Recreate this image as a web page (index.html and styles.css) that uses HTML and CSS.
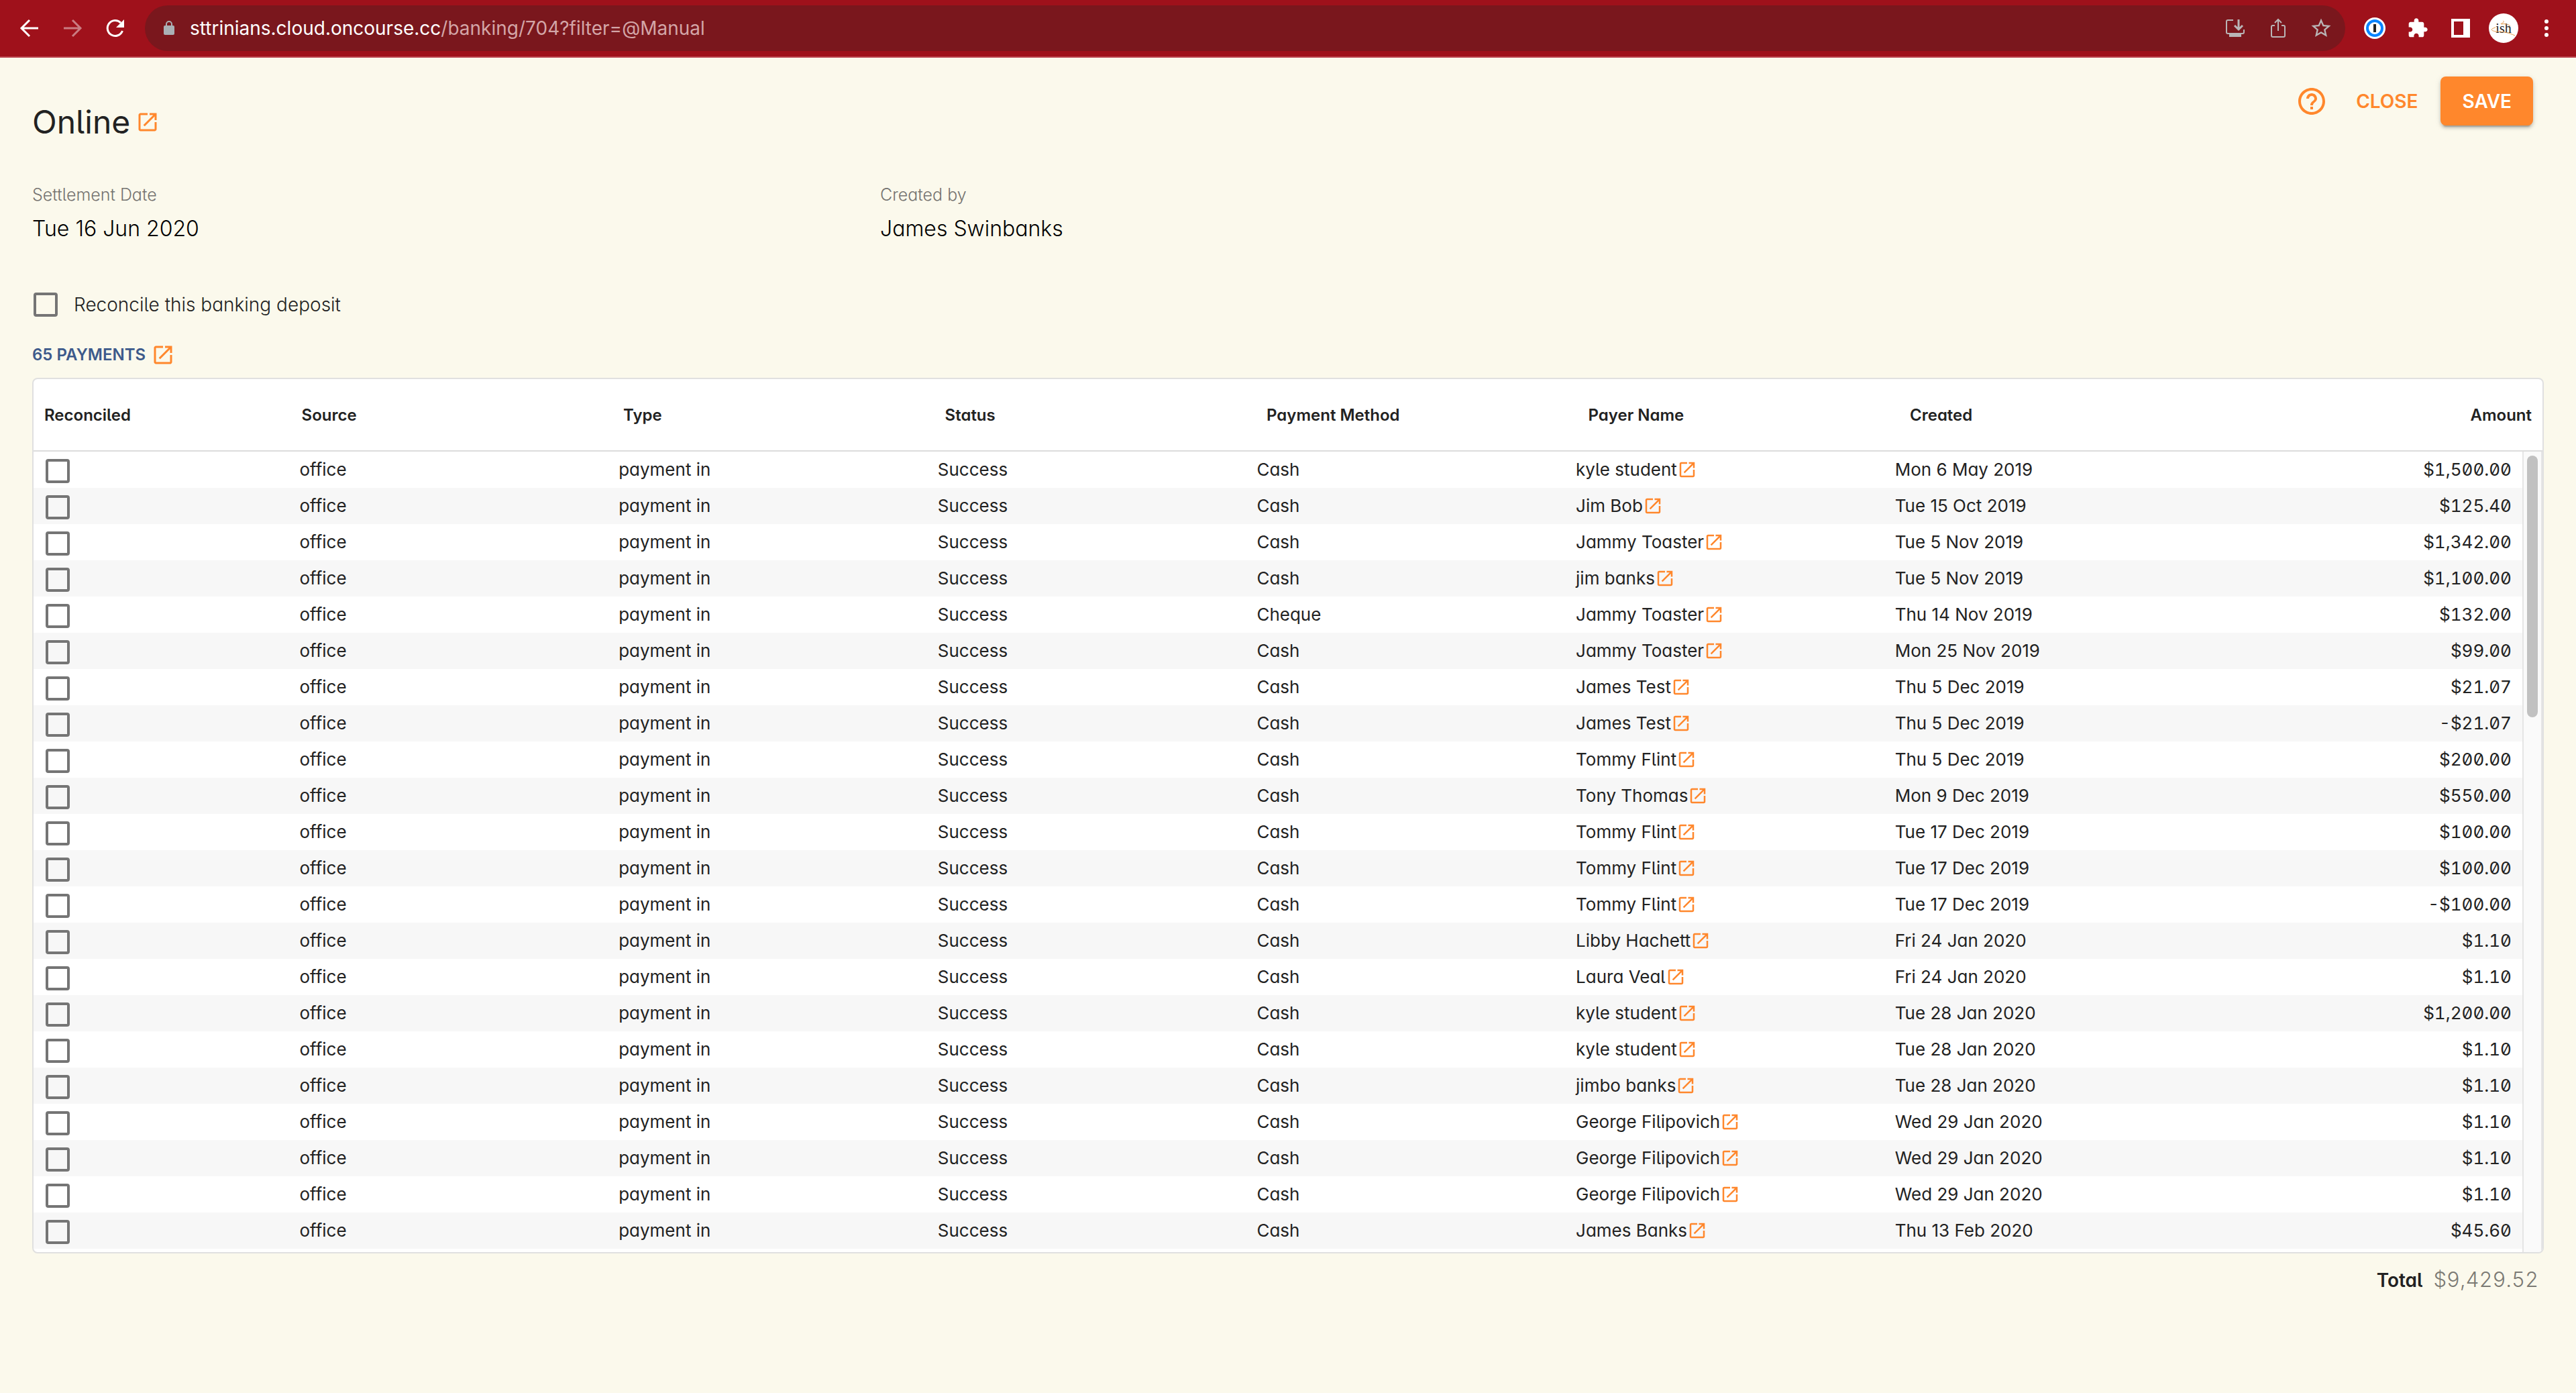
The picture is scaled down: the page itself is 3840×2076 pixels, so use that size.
FILE: index.html
```html
<!DOCTYPE html>
<html lang="en">
<head>
<meta charset="utf-8">
<title>Online – Banking deposit</title>
<link rel="stylesheet" href="styles.css">
</head>
<body>
<svg class="defs" aria-hidden="true">
  <symbol id="open" viewBox="0 0 24 24"><path d="M19 19H5V5h7V3H5c-1.110 0-2 .9-2 2v14c0 1.100.89 2 2 2h14c1.100 0 2-.9 2-2v-7h-2v7zM14 3v2h3.590l-9.830 9.830 1.410 1.410L19 6.410V10h2V3h-7z"/></symbol>
</svg>

<header class="toolbar">
  <nav class="nav">
    <button class="tool" aria-label="Back"><svg viewBox="0 0 32 32"><path d="M29 16H5M16 4 4 16l12 12" fill="none" stroke="#fff" stroke-width="3"/></svg></button>
    <button class="tool faded" aria-label="Forward"><svg viewBox="0 0 32 32"><path d="M3 16h24M16 4l12 12-12 12" fill="none" stroke="#fff" stroke-width="3"/></svg></button>
    <button class="tool" aria-label="Reload"><svg viewBox="0 0 32 32"><path d="M26.500 20A11.500 11.500 0 1 1 24 8" fill="none" stroke="#fff" stroke-width="3"/><path d="M29 3v12H17z" fill="#fff"/></svg></button>
  </nav>
  <div class="address">
    <svg class="lock" viewBox="0 0 18 24"><path d="M5 9V6a4 4 0 0 1 8 0v3" fill="none" stroke="#aab0b5" stroke-width="2"/><rect x="1" y="8" width="16" height="14" rx="2" fill="#aab0b5"/></svg>
    <p class="url">sttrinians.cloud.oncourse.cc<span class="path">/banking/704?filter=@Manual</span></p>
    <button class="tool" aria-label="Install app"><svg viewBox="0 0 32 32"><path d="M13 4H5q-2 0-2 2v16q0 2 2 2h22q2 0 2-2v-4" fill="none" stroke="#b9b5b6" stroke-width="2"/><path d="M21 3v14M15 12l6 6 6-6" fill="none" stroke="#b9b5b6" stroke-width="3"/><path d="M7 24h18v5H7z" fill="#b9b5b6"/></svg></button>
    <button class="tool" aria-label="Share"><svg viewBox="0 0 32 32"><path d="M11 12H8q-2 0-2 2v13q0 2 2 2h16q2 0 2-2V14q0-2-2-2h-3M16 20V3M11 8l5-5 5 5" fill="none" stroke="#b9b5b6" stroke-width="2"/></svg></button>
    <button class="tool" aria-label="Bookmark"><svg viewBox="1 1 22 22"><path fill="#b9b5b6" d="M22 9.240l-7.190-.62L12 2 9.190 8.630 2 9.240l5.460 4.730L5.820 21 12 17.270 18.180 21l-1.630-7.030L22 9.240zM12 15.400l-3.760 2.270 1-4.280-3.320-2.880 4.380-.38L12 6.100l1.710 4.040 4.380.38-3.320 2.880 1 4.280L12 15.400z"/></svg></button>
  </div>
  <div class="extensions">
    <button class="tool" aria-label="Password manager"><svg viewBox="0 0 32 32"><circle cx="16" cy="16" r="16" fill="#fff"/><circle cx="16" cy="16" r="11" fill="#fff" stroke="#0a84ff" stroke-width="4"/><rect x="14" y="10" width="4" height="12" fill="#222"/></svg></button>
    <button class="tool" aria-label="Extensions"><svg viewBox="0 0 24 24"><path fill="#fff" d="M20.500 11H19V7c0-1.100-.9-2-2-2h-4V3.500C13 2.120 11.880 1 10.500 1S8 2.120 8 3.500V5H4c-1.100 0-1.990.9-1.990 2v3.800H3.500c1.490 0 2.700 1.210 2.700 2.700s-1.210 2.700-2.700 2.700H2V20c0 1.100.9 2 2 2h3.800v-1.500c0-1.490 1.210-2.700 2.700-2.700 1.490 0 2.700 1.210 2.700 2.700V22H17c1.100 0 2-.9 2-2v-4h1.500c1.380 0 2.500-1.120 2.500-2.500S21.880 11 20.500 11z"/></svg></button>
    <button class="tool" aria-label="Side panel"><svg viewBox="0 0 32 32"><path fill="#fff" fill-rule="evenodd" d="M2 2h28v28H2zM6 6v20h14V6z"/></svg></button>
    <button class="avatar" aria-label="Profile"><svg class="swirl" viewBox="0 0 44 44"><path d="M10 21c-8 2-8 5 2 6 11 0 18 2 27 6M21 11c5 3-6 4-2 5 5-1 10 0 13 3" fill="none" stroke="#e39a4a" stroke-width="1"/></svg>ish</button>
    <button class="tool" aria-label="Menu"><svg viewBox="0 0 32 32" fill="#fff"><circle cx="16" cy="6" r="3"/><circle cx="16" cy="16" r="3"/><circle cx="16" cy="26" r="3"/></svg></button>
  </div>
</header>

<main class="page">
  <div class="heading">
    <h1 class="title">Online <a href="#" class="open" aria-label="Open account"><svg><use href="#open"/></svg></a></h1>
    <div class="actions">
      <button class="help" aria-label="Help"><svg viewBox="0 0 24 24"><path d="M11 18h2v-2h-2v2zm1-16C6.480 2 2 6.480 2 12s4.480 10 10 10 10-4.480 10-10S17.520 2 12 2zm0 18c-4.410 0-8-3.590-8-8s3.590-8 8-8 8 3.590 8 8-3.590 8-8 8zm0-14c-2.210 0-4 1.790-4 4h2c0-1.100.9-2 2-2s2 .9 2 2c0 2-3 1.750-3 5h2c0-2.250 3-2.500 3-5 0-2.210-1.790-4-4-4z"/></svg></button>
      <button class="btn">CLOSE</button>
      <button class="btn save">SAVE</button>
    </div>
  </div>

  <dl class="details">
    <div><dt>Settlement Date</dt><dd>Tue 16 Jun 2020</dd></div>
    <div><dt>Created by</dt><dd>James Swinbanks</dd></div>
  </dl>

  <label class="reconcile"><input type="checkbox" class="check">Reconcile this banking deposit</label>

  <h2 class="subtitle">65 PAYMENTS <a href="#" class="open" aria-label="Open payments"><svg><use href="#open"/></svg></a></h2>

  <div class="frame">
    <table class="payments">
      <thead><tr><th>Reconciled</th><th>Source</th><th>Type</th><th>Status</th><th>Payment Method</th><th>Payer Name</th><th>Created</th><th class="amount">Amount</th></tr></thead>
      <tbody id="rows"></tbody>
    </table>
    <div class="scrollbar"><div class="thumb"></div></div>
  </div>

  <p class="total"><strong>Total</strong> <span class="sum">$9,429.52</span></p>
</main>
<script src="payments.js"></script>
</body>
</html>
```
FILE: styles.css
```css
* { box-sizing: border-box; }
body {
  margin: 0;
  min-height: 100vh;
  background: #fbf9ec;
  color: #222;
  font-family: Inter, "Liberation Sans", sans-serif;
  font-optical-sizing: none;
  font-feature-settings: "cv05", "cv11";
  font-size: 26px;
}
button { border: 0; background: none; padding: 0; font: inherit; cursor: pointer; }
h1, h2, p, dl, dd { margin: 0; }
.defs { position: absolute; width: 0; height: 0; }

.toolbar {
  display: flex;
  align-items: center;
  gap: 28px;
  height: 86px;
  padding: 0 28px;
  background: #9f111b;
  border-bottom: 2px solid #bb4650;
}
.nav { display: flex; gap: 32px; }
.tool { display: block; width: 32px; height: 32px; }
.tool svg { display: block; width: 100%; height: 100%; }
.faded { opacity: 0.45; }
.address {
  flex: 1;
  display: flex;
  align-items: center;
  gap: 32px;
  height: 68px;
  padding: 0 20px 0 27px;
  border-radius: 34px;
  background: #7a171d;
}
.lock { width: 18px; height: 24px; }
.url {
  flex: 1;
  margin-left: -10px;
  color: #fff;
  font-size: 28px;
  font-feature-settings: normal;
}
.path { color: #d3a5a7; }
.extensions { display: flex; align-items: center; gap: 32px; }
.avatar {
  position: relative;
  width: 44px;
  height: 44px;
  margin: 0 -6px;
  border-radius: 50%;
  background: #fff;
  color: #222;
  font: 20px "Liberation Serif", serif;
}
.swirl { position: absolute; inset: 0; }

.page { padding: 28px 48px 48px; }
.heading { display: flex; justify-content: space-between; align-items: flex-start; }
.title {
  display: flex;
  align-items: center;
  gap: 8px;
  padding-top: 36px;
  font-size: 48px;
  line-height: 64px;
  font-weight: 400;
}
.open { display: block; width: 36px; height: 36px; }
.open svg { display: block; width: 100%; height: 100%; fill: #ff872c; }
.actions { display: flex; align-items: center; gap: 16px; padding-right: 16px; }
.help { width: 48px; height: 48px; margin-right: 8px; }
.help svg { display: block; fill: #ff872c; }
.btn {
  height: 73px;
  padding: 0 18px;
  color: #ff872c;
  font-size: 28px;
  font-weight: 600;
}
.save {
  padding: 0 32px;
  border-radius: 8px;
  background: #ff872c;
  color: #fff;
  box-shadow: 0 6px 2px -4px rgba(0, 0, 0, .2), 0 4px 4px rgba(0, 0, 0, .14), 0 2px 10px rgba(0, 0, 0, .12);
}

.details { display: grid; grid-template-columns: 1264px 1fr; margin-top: 60px; }
.details dt { font-size: 25px; line-height: 32px; font-weight: 300; color: #757370; }
.details dd { margin-top: 13px; font-size: 32px; line-height: 44px; font-weight: 300; color: #000; }

.check {
  appearance: none;
  display: block;
  width: 36px;
  height: 36px;
  margin: 0 2px;
  border: 4px solid #757575;
  border-radius: 4px;
}
.reconcile {
  display: flex;
  align-items: center;
  gap: 22px;
  width: max-content;
  margin-top: 73px;
  font-size: 28px;
  line-height: 36px;
  font-weight: 300;
}
.subtitle {
  display: flex;
  align-items: center;
  gap: 8px;
  margin-top: 39px;
  color: #3d5a8b;
  font-size: 24px;
  line-height: 36px;
  font-weight: 600;
}

.frame {
  position: relative;
  margin-top: 16px;
  overflow: hidden;
  border: 2px solid #e0e0e0;
  border-radius: 8px;
  background: #fff;
}
.payments, .payments thead, .payments tbody { display: block; }
.payments tr { display: grid; grid-template-columns: 4fr repeat(7, 5fr); align-items: center; }
.payments thead { border-bottom: 2px solid #dcdcdc; }
.payments th { padding: 2px 16px 0; font-size: 24px; line-height: 104px; font-weight: 600; text-align: left; }
.payments tbody { padding: 0 30px 5px 0; }
.payments td { display: flex; align-items: center; padding: 0 16px; line-height: 54px; }
.payments tbody tr:nth-child(even) { background: #f7f7f7; }
.payments td .check { margin-top: 4px; }
.payments td .open { width: 30px; height: 30px; }
.payments th.amount { text-align: right; }
.payments td.amount { justify-content: flex-end; font-feature-settings: "tnum", "zero"; }
.scrollbar {
  position: absolute;
  top: 108px;
  right: 0;
  bottom: 0;
  width: 30px;
  padding: 6px 4px;
  border: solid #e5e5e5;
  border-width: 0 2px;
  background: #fafafa;
}
.thumb { width: 16px; height: 33%; margin: 0 auto; border-radius: 8px; background: #c1c1c1; }

.total {
  display: flex;
  justify-content: flex-end;
  align-items: baseline;
  gap: 16px;
  padding: 17px 8px 0 0;
  font-size: 28px;
  line-height: 44px;
}
.total strong { font-weight: 600; }
.sum { color: #7b7a74; font-size: 31px; font-weight: 300; font-feature-settings: "tnum", "zero"; }
```
FILE: payments.js
```javascript
const payments = [
  ["Cash", "kyle student", "Mon 6 May 2019", "$1,500.00"],
  ["Cash", "Jim Bob", "Tue 15 Oct 2019", "$125.40"],
  ["Cash", "Jammy Toaster", "Tue 5 Nov 2019", "$1,342.00"],
  ["Cash", "jim banks", "Tue 5 Nov 2019", "$1,100.00"],
  ["Cheque", "Jammy Toaster", "Thu 14 Nov 2019", "$132.00"],
  ["Cash", "Jammy Toaster", "Mon 25 Nov 2019", "$99.00"],
  ["Cash", "James Test", "Thu 5 Dec 2019", "$21.07"],
  ["Cash", "James Test", "Thu 5 Dec 2019", "-$21.07"],
  ["Cash", "Tommy Flint", "Thu 5 Dec 2019", "$200.00"],
  ["Cash", "Tony Thomas", "Mon 9 Dec 2019", "$550.00"],
  ["Cash", "Tommy Flint", "Tue 17 Dec 2019", "$100.00"],
  ["Cash", "Tommy Flint", "Tue 17 Dec 2019", "$100.00"],
  ["Cash", "Tommy Flint", "Tue 17 Dec 2019", "-$100.00"],
  ["Cash", "Libby Hachett", "Fri 24 Jan 2020", "$1.10"],
  ["Cash", "Laura Veal", "Fri 24 Jan 2020", "$1.10"],
  ["Cash", "kyle student", "Tue 28 Jan 2020", "$1,200.00"],
  ["Cash", "kyle student", "Tue 28 Jan 2020", "$1.10"],
  ["Cash", "jimbo banks", "Tue 28 Jan 2020", "$1.10"],
  ["Cash", "George Filipovich", "Wed 29 Jan 2020", "$1.10"],
  ["Cash", "George Filipovich", "Wed 29 Jan 2020", "$1.10"],
  ["Cash", "George Filipovich", "Wed 29 Jan 2020", "$1.10"],
  ["Cash", "James Banks", "Thu 13 Feb 2020", "$45.60"],
];

document.getElementById("rows").innerHTML = payments.map(([method, payer, created, amount]) => `
  <tr>
    <td><input type="checkbox" class="check" aria-label="Reconcile payment from ${payer}"></td>
    <td>office</td><td>payment in</td><td>Success</td><td>${method}</td>
    <td>${payer}<a href="#" class="open" aria-label="Open ${payer}"><svg><use href="#open"/></svg></a></td>
    <td>${created}</td><td class="amount">${amount}</td>
  </tr>`).join("");
```
